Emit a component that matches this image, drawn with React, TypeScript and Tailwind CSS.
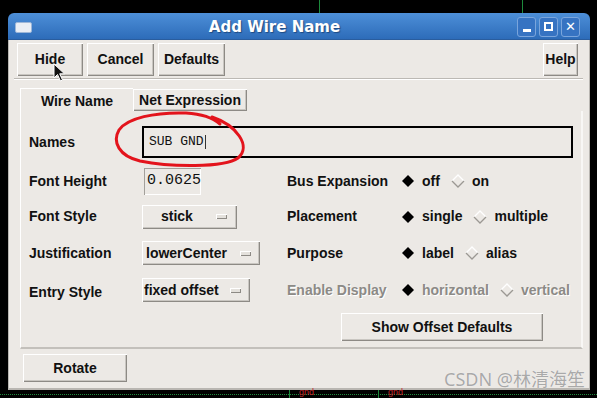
import React from "react";

const raised =
  "bg-[#ece9e5] shadow-[inset_1px_1px_0_#ffffff,inset_-1px_-1px_0_#8d8a85,inset_-2px_-2px_0_#c9c6c1]";

function Btn({ label, className = "" }: { label: string; className?: string }) {
  return (
    <div className={`flex items-center justify-center font-bold text-[14px] text-[#111] ${raised} ${className}`}>
      {label}
    </div>
  );
}

function Dropdown({ label, className }: { label: string; className: string }) {
  return (
    <div className={`flex items-center h-[24px] font-bold text-[14px] text-[#111] ${raised} ${className}`}>
      <span>{label}</span>
      <span className="ml-auto w-[11px] h-[5px] bg-[#e4e1dc] shadow-[inset_1px_1px_0_#ffffff,inset_-1px_-1px_0_#8d8a85]" />
    </div>
  );
}

function Diamond({ on }: { on: boolean }) {
  return (
    <svg width="14" height="14" viewBox="0 0 14 14" className="shrink-0">
      {on ? (
        <polygon points="7,1 13,7 7,13 1,7" fill="#000" />
      ) : (
        <>
          <polyline points="1,7 7,1 13,7" fill="none" stroke="#ffffff" strokeWidth="1.3" />
          <polyline points="1,7 7,13 13,7" fill="none" stroke="#9b9893" strokeWidth="1.3" />
        </>
      )}
    </svg>
  );
}

function Radio({ options, selected, disabled }: { options: string[]; selected: number; disabled?: boolean }) {
  return (
    <div className="flex items-center">
      {options.map((o, i) => (
        <div key={o} className={`flex items-center gap-[7px] ${i > 0 ? "ml-[11px]" : ""}`}>
          <Diamond on={i === selected} />
          <span className={disabled ? "text-[#8c8a86] [text-shadow:1px_1px_0_#ffffff]" : "text-[#111]"}>{o}</span>
        </div>
      ))}
    </div>
  );
}

export default function App() {
  return (
    <div className="relative w-[597px] h-[398px] bg-black overflow-hidden font-['Liberation_Sans',Arial,sans-serif]">
      {/* schematic bits behind the dialog */}
      <div className="absolute left-[319px] top-0 h-[13px] w-px bg-[#1d8a3c]" />
      <div className="absolute left-[522px] top-0 h-[13px] w-px bg-[#1d8a3c]" />
      <div className="absolute left-0 top-[394px] w-[597px] h-px border-t border-dotted border-[#1d8a3c]" />
      <div className="absolute left-[289px] top-[390px] h-[8px] w-px bg-[#1d8a3c]" />
      <div className="absolute left-[378px] top-[390px] h-[8px] w-px bg-[#1d8a3c]" />
      <div className="absolute left-[299px] top-[388px] text-[9px] leading-none text-[#c0262b]">gnd</div>
      <div className="absolute left-[388px] top-[388px] text-[9px] leading-none text-[#c0262b]">gnd</div>

      <div className="pt-[13px] pl-[8px]">
        <div className="w-[582px] h-[377px] flex flex-col rounded-t-[6px] overflow-hidden">
          {/* title bar */}
          <div className="h-[27px] flex items-center bg-gradient-to-b from-[#4d8fd8] to-[#2d6cb9] border-b border-[#2a5d9e]">
            <div className="ml-[7px] mt-[2px] w-[17px] h-[11px] rounded-[2px] bg-[#e9eef5] border border-[#9cb6d8]" />
            <div className="flex-1 pt-[2px] text-center text-white font-bold text-[15px] font-['DejaVu_Sans',sans-serif] [text-shadow:1px_1px_1px_#1e4a82]">
              Add Wire Name
            </div>
            <div className="flex gap-[3px] mr-[10px] mt-[1px]">
              {["_", "□", "✕"].map((g, i) => (
                <div
                  key={i}
                  className="w-[19px] h-[20px] rounded-[3px] border border-[#7aa5dc] bg-[#3673c2] flex items-center justify-center text-white font-bold text-[13px] leading-none font-['DejaVu_Sans',sans-serif]"
                >
                  {i === 0 ? (
                    <span className="block w-[8px] h-[3px] bg-white mt-[8px]" />
                  ) : i === 1 ? (
                    <span className="block w-[9px] h-[9px] border-2 border-white" />
                  ) : (
                    g
                  )}
                </div>
              ))}
            </div>
          </div>

          {/* body */}
          <div className="flex-1 flex flex-col bg-[#ece9e5] border-x border-b-2 border-[#b9b6b1]">
            <div className="flex items-center mt-[3px] pl-[8px] pr-[11px] h-[33px]">
              <Btn label="Hide" className="w-[66px] h-[33px]" />
              <Btn label="Cancel" className="ml-[4px] w-[67px] h-[33px]" />
              <Btn label="Defaults" className="ml-[4px] w-[67px] h-[33px]" />
              <Btn label="Help" className="ml-auto w-[35px] h-[33px]" />
            </div>
            <div className="mt-[2px] ml-[5px] mr-[6px] h-[2px] border-t border-[#bcb9b4] border-b border-b-white" />

            {/* tabs */}
            <div className="mt-[8px] ml-[11px] flex items-end h-[23px] font-bold text-[14px] text-[#111]">
              <div className="w-[113px] h-[23px] pt-[2px] flex items-center justify-center border-l border-t border-white">
                Wire Name
              </div>
              <div className={`w-[114px] h-[22px] pt-[1px] flex items-center justify-center ${raised}`}>Net Expression</div>
            </div>

            {/* panel */}
            <div className="ml-[11px] mr-[6px] h-[238px] border-l border-white border-b-2 border-b-[#c3c0bb] border-r-2 border-r-[#f8f7f5] pt-[15px] pl-[8px] flex flex-col text-[14px] font-bold text-[#111]">
              <div className="flex items-center h-[32px]">
                <span className="w-[113px] pt-[1px]">Names</span>
                <div className="w-[431px] h-[32px] border-2 border-black flex items-center pl-[5px] font-['Liberation_Mono',monospace] font-normal text-[13px]">
                  SUB GND<span className="ml-[1px] w-px h-[14px] bg-[#333]" />
                </div>
              </div>

              <div className="flex items-center h-[36px] mt-[5px]">
                <span className="w-[113px]">Font Height</span>
                <div className="w-[145px]">
                  <div className="ml-[2px] w-[57px] h-[27px] flex items-center pl-[3px] font-['Liberation_Mono',monospace] font-normal text-[15px] shadow-[inset_1px_1px_0_#a3a09b,inset_-1px_-1px_0_#ffffff]">
                    0.0625<span className="w-px h-[14px] bg-[#555]" />
                  </div>
                </div>
                <span className="w-[114px]">Bus Expansion</span>
                <Radio options={["off", "on"]} selected={0} />
              </div>

              <div className="flex items-center h-[35px]">
                <span className="w-[113px]">Font Style</span>
                <div className="w-[145px]">
                  <Dropdown label="stick" className="w-[95px] pl-[19px] pr-[10px]" />
                </div>
                <span className="w-[114px]">Placement</span>
                <Radio options={["single", "multiple"]} selected={0} />
              </div>

              <div className="flex items-center h-[38px]">
                <span className="w-[113px] pt-[1px]">Justification</span>
                <div className="w-[145px]">
                  <Dropdown label="lowerCenter" className="w-[118px] pl-[4px] pr-[9px]" />
                </div>
                <span className="w-[114px]">Purpose</span>
                <Radio options={["label", "alias"]} selected={0} />
              </div>

              <div className="flex items-center h-[38px]">
                <span className="w-[113px] pt-[2px]">Entry Style</span>
                <div className="w-[145px] -mt-[2px]">
                  <Dropdown label="fixed offset" className="w-[108px] pl-[2px] pr-[9px]" />
                </div>
                <span className="w-[114px] -mt-[2px] text-[#8c8a86] [text-shadow:1px_1px_0_#ffffff]">Enable Display</span>
                <div className="-mt-[2px]">
                  <Radio options={["horizontal", "vertical"]} selected={0} disabled />
                </div>
              </div>

              <div className="mt-[3px] pl-[312px]">
                <Btn label="Show Offset Defaults" className="w-[202px] h-[28px]" />
              </div>
            </div>

            <div className="mt-[5px] ml-[14px]">
              <Btn label="Rotate" className="w-[104px] h-[28px]" />
            </div>
          </div>
        </div>
      </div>

      {/* annotation ellipse */}
      <svg className="absolute left-0 top-0 pointer-events-none" width="597" height="398">
        <path
          d="M 212 117 C 236 125, 252 146, 238 158 C 224 168, 170 167, 140 161 C 119 156, 112 142, 119 130 C 127 118, 155 112, 186 113 C 202 114, 212 117, 220 124"
          fill="none"
          stroke="#e3141c"
          strokeWidth="3"
          strokeLinecap="round"
        />
      </svg>

      {/* mouse pointer */}
      <svg className="absolute left-[53px] top-[63px] pointer-events-none" width="14" height="20" viewBox="0 0 14 20">
        <path d="M1 1 L1 15 L4.5 11.5 L7.5 18 L9.5 17 L6.7 10.8 L11.5 10.8 Z" fill="#111" stroke="#fff" strokeWidth="1" />
      </svg>

      {/* watermark */}
      <div className="absolute right-[12px] top-[366px] text-[18px] text-[#a9a9a9] font-['Noto_Sans','Noto_Sans_CJK_SC',sans-serif] [text-shadow:0_0_1px_#ffffff]">
        CSDN @林清海笙
      </div>
    </div>
  );
}
